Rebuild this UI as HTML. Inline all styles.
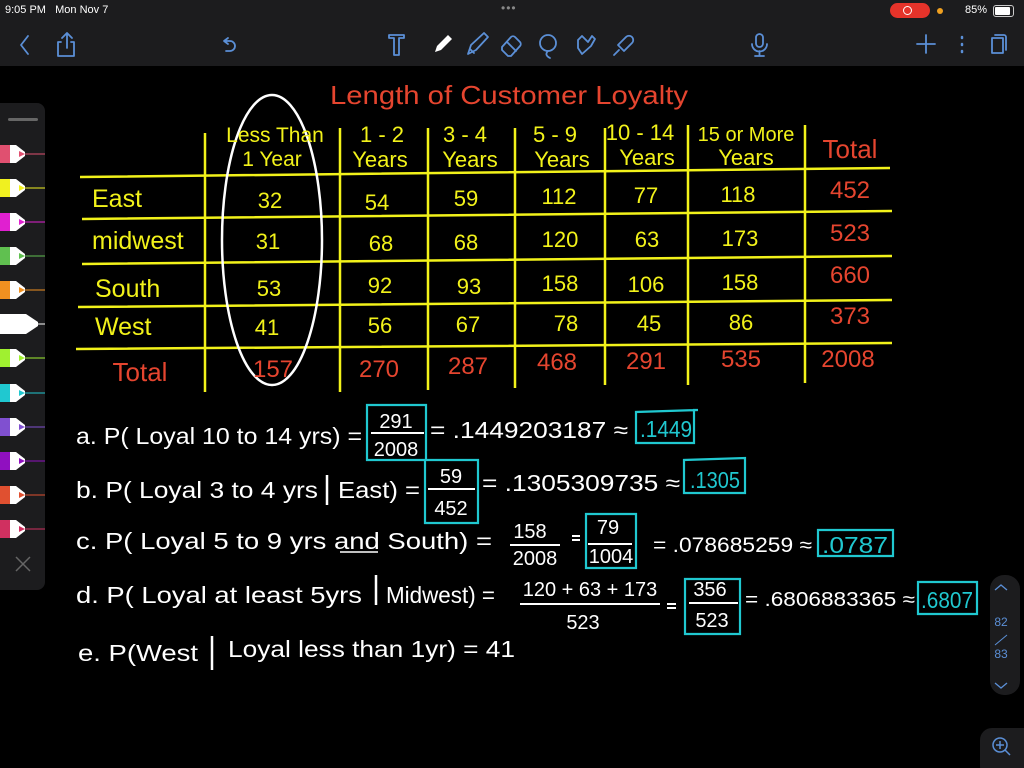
<!DOCTYPE html>
<html><head><meta charset="utf-8"><style>
html,body{margin:0;padding:0;background:#000;width:1024px;height:768px;overflow:hidden;font-family:"Liberation Sans",sans-serif}
.status{position:absolute;left:0;top:0;width:1024px;height:22px;background:#1c1c1e;color:#fff;font-size:11px}
.tool{position:absolute;left:0;top:22px;width:1024px;height:44px;background:#1c1c1e}
svg{position:absolute;left:0;top:0}
</style></head><body>
<div class="status">
<span style="position:absolute;left:5px;top:4px">9:05 PM&nbsp;&nbsp; Mon Nov 7</span>
<span style="position:absolute;left:501px;top:1px;color:#888;font-size:12px;letter-spacing:1px">•••</span>
<div style="position:absolute;left:890px;top:3px;width:40px;height:15px;background:#e5332a;border-radius:8px"></div>
<div style="position:absolute;left:903px;top:6px;width:7px;height:7px;border:1.5px solid #fff;border-radius:50%"></div>
<div style="position:absolute;left:937px;top:8px;width:6px;height:6px;background:#f0a020;border-radius:50%"></div>
<span style="position:absolute;left:965px;top:4px">85%</span>
<div style="position:absolute;left:993px;top:5px;width:19px;height:10px;border:1px solid #ccc;border-radius:3px"><div style="width:15px;height:8px;margin:1px;background:#fff;border-radius:1px"></div></div>
</div>
<div class="tool"></div>
<svg width="1024" height="768" viewBox="0 0 1024 768" fill="none">
<g stroke="#5b8fd6" stroke-width="1.8" stroke-linecap="round" stroke-linejoin="round">
<path d="M28 36 L21 45 L28 54"/>
<path d="M61 42 h-3 v14 h16 v-14 h-3 M67 48 V34 M62 38 l5-5 5 5"/>
<path d="M228 38 l-4 3 4 3 M224 41 h6 a5 5 0 0 1 0 10 h-4"/>
<path d="M389 35 h15 v3 h-5 v17 h-5 v-17 h-5 z"/>
<path d="M468 54 l3-9 13-12 4 4 -12 13 z M470 49 l4 4"/>
<path d="M502 47 l9-10 a3 3 0 0 1 4 0 l5 5 a3 3 0 0 1 0 4 l-9 10 h-3 l-6-6 z M507 42 l9 9"/>
<circle cx="548" cy="43" r="8"/><path d="M548 51 q-4 4 2 7"/>
<path d="M582 54 l-4-6 v-8 l4 -4 l6 6 l4-6 l3 3 -4 7 z"/>
<path d="M614 55 l5-5 M618 45 l8-8 a4 4 0 0 1 6 6 l-8 8 z"/>
<rect x="756" y="34" width="7" height="13" rx="3.5"/><path d="M752 44 a7 7 0 0 0 15 0 M759.5 51 v5 M755 56 h9"/>
<path d="M926 35 v18 M917 44 h18"/>
<path d="M962 37 v1 M962 44 v1 M962 51 v1" stroke-width="2.5"/>
<path d="M992 38 h11 v15 h-11 z M995 35 h9 a2 2 0 0 1 2 2 v13"/>
</g>
<path d="M435 52 l2-6 11-11 4 4 -11 11 z" fill="#fff"/>
<rect x="-10" y="103" width="55" height="487" rx="8" fill="#1c1c1e"/>
<rect x="8" y="118" width="30" height="3" rx="1.5" fill="#666"/>
<g>
<g transform="translate(0,154)"><rect x="0" y="-9" width="10" height="18" fill="#e05070"/><path d="M10 -9 h6 l9 7 v4 l-9 7 h-6 z" fill="#fff"/><path d="M19 -3 l6 3 -6 3z" fill="#e05070"/><line x1="25" y1="0" x2="45" y2="0" stroke="#e05070"/></g>
<g transform="translate(0,188)"><rect x="0" y="-9" width="10" height="18" fill="#f0f020"/><path d="M10 -9 h6 l9 7 v4 l-9 7 h-6 z" fill="#fff"/><path d="M19 -3 l6 3 -6 3z" fill="#f0f020"/><line x1="25" y1="0" x2="45" y2="0" stroke="#f0f020"/></g>
<g transform="translate(0,222)"><rect x="0" y="-9" width="10" height="18" fill="#e020d0"/><path d="M10 -9 h6 l9 7 v4 l-9 7 h-6 z" fill="#fff"/><path d="M19 -3 l6 3 -6 3z" fill="#e020d0"/><line x1="25" y1="0" x2="45" y2="0" stroke="#e020d0"/></g>
<g transform="translate(0,256)"><rect x="0" y="-9" width="10" height="18" fill="#60c050"/><path d="M10 -9 h6 l9 7 v4 l-9 7 h-6 z" fill="#fff"/><path d="M19 -3 l6 3 -6 3z" fill="#60c050"/><line x1="25" y1="0" x2="45" y2="0" stroke="#60c050"/></g>
<g transform="translate(0,290)"><rect x="0" y="-9" width="10" height="18" fill="#f09020"/><path d="M10 -9 h6 l9 7 v4 l-9 7 h-6 z" fill="#fff"/><path d="M19 -3 l6 3 -6 3z" fill="#f09020"/><line x1="25" y1="0" x2="45" y2="0" stroke="#f09020"/></g>
<g transform="translate(0,324)"><rect x="0" y="-10" width="20" height="20" fill="#fff"/><path d="M20 -10 h6 l12 8 v4 l-12 8 h-6 z" fill="#fff"/><line x1="38" y1="0" x2="45" y2="0" stroke="#fff"/></g>
<g transform="translate(0,358)"><rect x="0" y="-9" width="10" height="18" fill="#a0f030"/><path d="M10 -9 h6 l9 7 v4 l-9 7 h-6 z" fill="#fff"/><path d="M19 -3 l6 3 -6 3z" fill="#a0f030"/><line x1="25" y1="0" x2="45" y2="0" stroke="#a0f030"/></g>
<g transform="translate(0,393)"><rect x="0" y="-9" width="10" height="18" fill="#20c8d0"/><path d="M10 -9 h6 l9 7 v4 l-9 7 h-6 z" fill="#fff"/><path d="M19 -3 l6 3 -6 3z" fill="#20c8d0"/><line x1="25" y1="0" x2="45" y2="0" stroke="#20c8d0"/></g>
<g transform="translate(0,427)"><rect x="0" y="-9" width="10" height="18" fill="#8050d0"/><path d="M10 -9 h6 l9 7 v4 l-9 7 h-6 z" fill="#fff"/><path d="M19 -3 l6 3 -6 3z" fill="#8050d0"/><line x1="25" y1="0" x2="45" y2="0" stroke="#8050d0"/></g>
<g transform="translate(0,461)"><rect x="0" y="-9" width="10" height="18" fill="#9010c0"/><path d="M10 -9 h6 l9 7 v4 l-9 7 h-6 z" fill="#fff"/><path d="M19 -3 l6 3 -6 3z" fill="#9010c0"/><line x1="25" y1="0" x2="45" y2="0" stroke="#9010c0"/></g>
<g transform="translate(0,495)"><rect x="0" y="-9" width="10" height="18" fill="#e05030"/><path d="M10 -9 h6 l9 7 v4 l-9 7 h-6 z" fill="#fff"/><path d="M19 -3 l6 3 -6 3z" fill="#e05030"/><line x1="25" y1="0" x2="45" y2="0" stroke="#e05030"/></g>
<g transform="translate(0,529)"><rect x="0" y="-9" width="10" height="18" fill="#d03060"/><path d="M10 -9 h6 l9 7 v4 l-9 7 h-6 z" fill="#fff"/><path d="M19 -3 l6 3 -6 3z" fill="#d03060"/><line x1="25" y1="0" x2="45" y2="0" stroke="#d03060"/></g>
</g>
<path d="M16 557 l14 14 M30 557 l-14 14" stroke="#666" stroke-width="1.5"/>
<rect x="990" y="575" width="30" height="120" rx="14" fill="#1c1c1e"/>
<path d="M995 590 l6-5 6 5 M995 683 l6 5 6-5" stroke="#5b8fd6" stroke-width="1.3"/>
<text x="1001" y="626" fill="#5b8fd6" font-size="12" text-anchor="middle">82</text>
<path d="M995 645 l12-10" stroke="#5b8fd6"/>
<text x="1001" y="658" fill="#5b8fd6" font-size="12" text-anchor="middle">83</text>
<rect x="980" y="728" width="60" height="50" rx="12" fill="#1c1c1e"/>
<circle cx="1000" cy="745" r="7" stroke="#5b8fd6" stroke-width="1.5"/><path d="M1005 750 l5 5 M1000 741 v8 M996 745 h8" stroke="#5b8fd6" stroke-width="1.5"/>

<text x="330" y="104" fill="#e5452f" font-size="26" textLength="358" lengthAdjust="spacingAndGlyphs">Length of Customer Loyalty</text>
<g stroke="#f2f21a" stroke-width="2.5">
<path d="M80 177 L890 168 M82 219 L892 211 M82 264 L892 256 M78 307 L892 300 M76 349 L892 343"/>
<path d="M205 133 V392 M340 128 V392 M428 128 V390 M515 128 V388 M605 128 V385 M688 125 V385 M805 125 V383"/>
</g>
<ellipse cx="272" cy="240" rx="50" ry="145" stroke="#fff" stroke-width="2.5"/>
<g fill="#f2f21a" font-size="22" text-anchor="middle">
<text x="275" y="142" font-size="21">Less Than</text><text x="272" y="166" font-size="21">1 Year</text>
<text x="382" y="142">1 - 2</text><text x="380" y="167">Years</text>
<text x="465" y="142">3 - 4</text><text x="470" y="167">Years</text>
<text x="555" y="142">5 - 9</text><text x="562" y="167">Years</text>
<text x="640" y="140">10 - 14</text><text x="647" y="165">Years</text>
<text x="746" y="141" font-size="20">15 or More</text><text x="746" y="165">Years</text>
<g text-anchor="start" font-size="25"><text x="92" y="207">East</text><text x="92" y="249">midwest</text><text x="95" y="297">South</text><text x="95" y="335">West</text></g>
<text x="270" y="208">32</text><text x="377" y="210">54</text><text x="466" y="206">59</text><text x="559" y="204">112</text><text x="646" y="203">77</text><text x="738" y="202">118</text>
<text x="268" y="249">31</text><text x="381" y="251">68</text><text x="466" y="250">68</text><text x="560" y="247">120</text><text x="647" y="247">63</text><text x="740" y="246">173</text>
<text x="269" y="296">53</text><text x="380" y="293">92</text><text x="469" y="294">93</text><text x="560" y="291">158</text><text x="646" y="292">106</text><text x="740" y="290">158</text>
<text x="267" y="335">41</text><text x="380" y="333">56</text><text x="468" y="332">67</text><text x="566" y="331">78</text><text x="649" y="331">45</text><text x="741" y="330">86</text>
</g>
<g fill="#e5452f" font-size="24" text-anchor="middle">
<text x="850" y="158" font-size="26">Total</text>
<text x="850" y="198">452</text><text x="850" y="241">523</text><text x="850" y="283">660</text><text x="850" y="324">373</text>
<text x="140" y="381" font-size="26">Total</text>
<text x="273" y="377">157</text><text x="379" y="377">270</text><text x="468" y="374">287</text><text x="557" y="370">468</text><text x="646" y="369">291</text><text x="741" y="367">535</text><text x="848" y="367">2008</text>
</g>
<g fill="#fff" font-size="23" lengthAdjust="spacingAndGlyphs">
<text x="76" y="444" textLength="286" lengthAdjust="spacingAndGlyphs">a. P( Loyal 10 to 14 yrs) =</text>
<text x="430" y="438" textLength="198" lengthAdjust="spacingAndGlyphs">= .1449203187 ≈</text>
<text x="76" y="498" textLength="242" lengthAdjust="spacingAndGlyphs">b. P( Loyal 3 to 4 yrs</text><text x="338" y="498" textLength="82" lengthAdjust="spacingAndGlyphs">East) =</text>
<text x="482" y="491" textLength="198" lengthAdjust="spacingAndGlyphs">= .1305309735 ≈</text>
<text x="76" y="549" textLength="416" lengthAdjust="spacingAndGlyphs">c. P( Loyal 5 to 9 yrs and South) =</text>
<text x="653" y="552" font-size="21" textLength="159" lengthAdjust="spacingAndGlyphs">= .078685259 ≈</text>
<text x="76" y="603" textLength="286" lengthAdjust="spacingAndGlyphs">d. P( Loyal at least 5yrs</text><text x="386" y="603" textLength="109" lengthAdjust="spacingAndGlyphs">Midwest) =</text>
<text x="745" y="606" font-size="20" textLength="170" lengthAdjust="spacingAndGlyphs">= .6806883365 ≈</text>
<text x="78" y="661" textLength="120" lengthAdjust="spacingAndGlyphs">e. P(West</text><text x="228" y="657" textLength="287" lengthAdjust="spacingAndGlyphs">Loyal less than 1yr) = 41</text>
</g>
<path d="M327 475 V505 M376 575 V605 M212 636 V670" stroke="#fff" stroke-width="2.5"/>
<path d="M340 552 H378" stroke="#fff" stroke-width="1.5"/>
<g fill="#fff" font-size="20" text-anchor="middle">
<text x="396" y="428">291</text><text x="396" y="456">2008</text>
<text x="451" y="483">59</text><text x="451" y="515">452</text>
<text x="530" y="538">158</text><text x="535" y="565">2008</text>
<text x="608" y="534">79</text><text x="611" y="563">1004</text>
<text x="590" y="596">120 + 63 + 173</text><text x="583" y="629">523</text>
<text x="710" y="596">356</text><text x="712" y="627">523</text>
</g>
<g stroke="#fff" stroke-width="2"><path d="M371 433 H424 M428 489 H475 M510 545 H560 M588 544 H632 M520 604 H660 M689 603 H738 M572 536 H580 M572 540 H580 M667 604 H676 M667 608 H676"/></g>
<g stroke="#20c8d0" stroke-width="2.2">
<path d="M367 405 H426 V460 H367 Z M698 410 H694 V443 H636 V412 Z M425 460 H478 V523 H425 Z M745 458 V493 H684 V460 Z M586 514 H636 V568 H586 Z M818 530 H893 V556 H818 Z M685 579 H740 V634 H685 Z M918 582 H977 V614 H918 Z"/>
</g>
<g fill="#20c8d0" font-size="23"><text x="640" y="437" textLength="52" lengthAdjust="spacingAndGlyphs">.1449</text><text x="690" y="488" textLength="50" lengthAdjust="spacingAndGlyphs">.1305</text><text x="822" y="553" textLength="66" lengthAdjust="spacingAndGlyphs">.0787</text><text x="921" y="608" textLength="52" lengthAdjust="spacingAndGlyphs">.6807</text></g>
</svg>
</body></html>
